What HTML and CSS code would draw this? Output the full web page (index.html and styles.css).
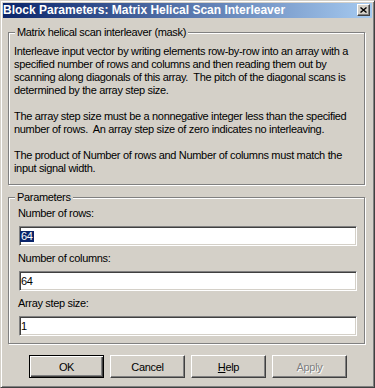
FILE: index.html
```html
<!DOCTYPE html>
<html>
<head lang="en">
    <meta charset="UTF-8">
    <title>Block Parameters: Matrix Helical Scan Interleaver</title>
    <link rel="stylesheet" href="styles.css">
</head>
<body>
<div class="dlg">
    <!-- title bar -->
    <div class="caption">
        <span class="caption-text">Block Parameters: Matrix Helical Scan Interleaver</span>
        <span class="close-btn">
            <svg width="7" height="6" viewBox="0 0 7 6"><path d="M0.5 0.5 L6.5 5.5 M6.5 0.5 L0.5 5.5" stroke="#000" stroke-width="1.4" fill="none"/></svg>
        </span>
    </div>

    <div class="client">
        <!-- mask description -->
        <fieldset class="group">
            <legend>Matrix helical scan interleaver (mask)</legend>
            <div class="desc-body">
                <p>Interleave input vector by writing elements row-by-row into an array with a<br>
                specified number of rows and columns and then reading them out by<br>
                scanning along diagonals of this array.&nbsp; The pitch of the diagonal scans is<br>
                determined by the array step size.</p>
                <p>The array step size must be a nonnegative integer less than the specified<br>
                number of rows.&nbsp; An array step size of zero indicates no interleaving.</p>
                <p>The product of Number of rows and Number of columns must match the<br>
                input signal width.</p>
            </div>
        </fieldset>

        <!-- parameters -->
        <fieldset class="group">
            <legend>Parameters</legend>
            <div class="params-body">
                <div class="lbl">Number of rows:</div>
                <div class="edit"><span class="sel">64</span></div>
                <div class="lbl">Number of columns:</div>
                <div class="edit">64</div>
                <div class="lbl">Array step size:</div>
                <div class="edit">1</div>
            </div>
        </fieldset>

        <div class="buttons">
            <button class="btn default">OK</button>
            <button class="btn">Cancel</button>
            <button class="btn"><u>H</u>elp</button>
            <button class="btn disabled">Apply</button>
        </div>
    </div>
</div>
</body>
</html>
```

FILE: styles.css
```css
* { box-sizing: border-box; }

body {
    margin: 0;
    background: #d4d0c8;
    font-family: "Liberation Sans", Arial, sans-serif;
    font-size: 11px;
    color: #000;
}

/* window frame */
.dlg {
    width: 375px;
    height: 388px;
    background: #d4d0c8;
    border: 1px solid;
    border-color: #d4d0c8 #404040 #404040 #d4d0c8;
    box-shadow: inset 1px 1px #fff, inset -1px -1px #808080;
    padding: 2px;
    display: flex;
    flex-direction: column;
}

/* title bar */
.caption {
    height: 15px;
    display: flex;
    align-items: flex-start;
    background: linear-gradient(to right, #0a246a, #a6caf0);
    color: #fff;
}
.caption-text {
    flex: 1;
    font-weight: bold;
    font-size: 12px;
    line-height: 15px;
    white-space: nowrap;
}
.close-btn {
    width: 13px;
    height: 12px;
    margin: 1px 2px 0 0;
    background: #d4d0c8;
    border: 1px solid;
    border-color: #fff #404040 #404040 #fff;
    box-shadow: inset -1px -1px #808080;
    display: flex;
    align-items: center;
    justify-content: center;
}
.close-btn svg { display: block; }

/* client area */
.client {
    flex: 1;
    display: flex;
    flex-direction: column;
    letter-spacing: -0.33px;
}

/* etched group boxes */
.group {
    margin: 8px 7px 0 5px;
    padding: 0;
    min-width: 0;
    border: 1px solid #808080;
    box-shadow: inset 1px 1px #fff, 1px 1px #fff;
}
.group + .group { margin-top: 6px; }
.group legend {
    margin-left: 6px;
    padding: 0 2px;
    line-height: 13px;
    background: #d4d0c8;
}

.desc-body {
    padding: 6px 0 9px 5px;
    line-height: 13px;
    white-space: nowrap;
}
.desc-body p { margin: 0 0 13px; }
.desc-body p:last-child { margin-bottom: 0; }

.params-body {
    padding: 3px 7px 7px 10px;
    display: flex;
    flex-direction: column;
}
.lbl {
    line-height: 13px;
    margin-left: -1px;
}

/* sunken edit fields */
.edit {
    height: 20px;
    margin: 6px 0;
    background: #fff;
    border: 1px solid;
    border-color: #808080 #fff #fff #808080;
    box-shadow: inset 1px 1px #404040, inset -1px -1px #d4d0c8;
    padding: 0 1px;
    line-height: 18px;
    white-space: nowrap;
}
.edit:last-child { margin-bottom: 0; }
.sel {
    display: inline-block;
    margin-left: -1px;
    padding: 0 1px;
    line-height: 11px;
    background: #0a246a;
    color: #fff;
}

/* push buttons */
.buttons {
    display: flex;
    justify-content: center;
    gap: 6px;
    margin-top: 11px;
    padding-left: 1px;
}
.btn {
    width: 75px;
    height: 23px;
    padding: 0;
    font: inherit;
    letter-spacing: inherit;
    color: #000;
    background: #d4d0c8;
    border: 1px solid;
    border-color: #fff #404040 #404040 #fff;
    box-shadow: inset -1px -1px #808080;
}
.btn.default {
    border-color: #000;
    box-shadow: inset 1px 1px #fff, inset -1px -1px #404040, inset -2px -2px #808080;
}
.btn.disabled {
    color: #808080;
    text-shadow: 1px 1px #fff;
}
```
